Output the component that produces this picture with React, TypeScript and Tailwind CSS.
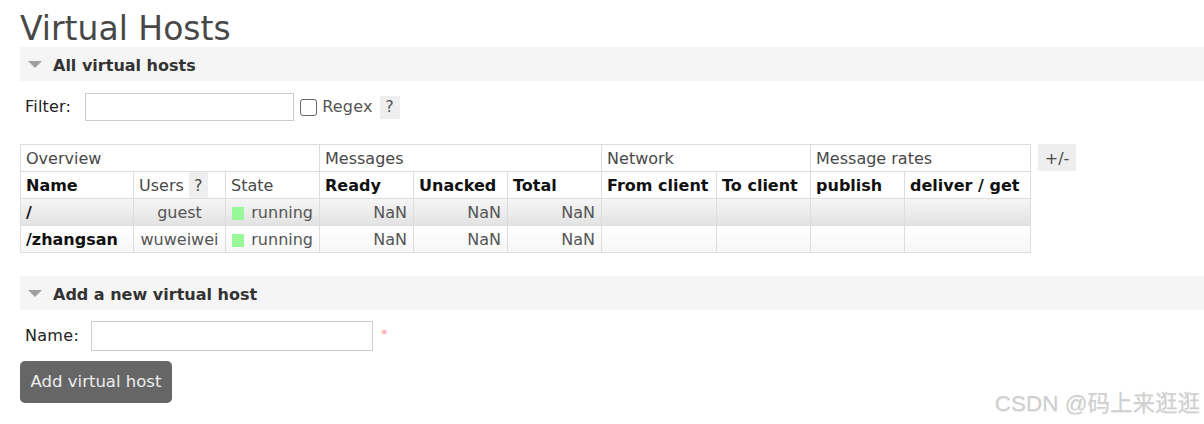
import React from "react";

const cols = [113, 92, 94, 94, 94, 94, 115, 94, 94, 126];

const rows = [
    { name: "/", user: "guest", odd: true },
    { name: "/zhangsan", user: "wuweiwei", odd: false },
];

function SectionBar({ title }: { title: string }) {
    return (
        <div className="flex items-center h-[34px] bg-[#f5f5f5] pl-[8px] pt-[3px]">
            <span className="w-0 h-0 border-l-[7px] border-r-[7px] border-t-[7px] border-l-transparent border-r-transparent border-t-[#a0a0a0] mr-[11px] -mt-[2px]" />
            <span className="font-bold text-[#333] text-[16px]">{title}</span>
        </div>
    );
}

const cell = "border border-[#ddd] pt-[4px] pb-[2px] leading-[20px]";

export default function App() {
    return (
        <div className="relative w-[1204px] h-[424px] bg-white overflow-hidden pl-[20px] font-['DejaVu_Sans',sans-serif] text-[16px] text-[#484848]">
            <h1 className="mt-[12px] text-[33px] leading-[34px] text-[#484848] mb-[1px]">Virtual Hosts</h1>

            <SectionBar title="All virtual hosts" />

            <div className="flex items-center mt-[12px] h-[28px]">
                <span className="ml-[5px] text-[#222] tracking-[0.2px]">Filter:</span>
                <input className="ml-[14px] w-[209px] h-[28px] border border-[#ccc] bg-white" />
                <span className="ml-[6px] w-[17px] h-[17px] border border-[#666] rounded-[3px] bg-white" />
                <span className="ml-[5px] text-[#555] tracking-[0.2px]">Regex</span>
                <span className="ml-[7px] w-[20px] h-[23px] bg-[#eee] text-[#555] flex items-center justify-center">?</span>
            </div>

            <div className="flex items-start mt-[23px]">
                <table className="border-collapse border border-[#ddd] table-fixed w-[1010px]">
                    <colgroup>
                        {cols.map((w, i) => (
                            <col key={i} style={{ width: w }} />
                        ))}
                    </colgroup>
                    <thead>
                        <tr className="bg-white">
                            <th colSpan={3} className={`${cell} font-normal text-left px-[5px] text-[#484848]`}>Overview</th>
                            <th colSpan={3} className={`${cell} font-normal text-left px-[5px] text-[#484848]`}>Messages</th>
                            <th colSpan={2} className={`${cell} font-normal text-left px-[5px] text-[#484848]`}>Network</th>
                            <th colSpan={2} className={`${cell} font-normal text-left px-[5px] text-[#484848]`}>Message rates</th>
                        </tr>
                        <tr className="bg-white text-[#111]">
                            <th className={`${cell} text-left px-[5px]`}>Name</th>
                            <th className="border border-[#ddd] text-left font-normal text-[#484848] p-0">
                                <div className="flex items-stretch h-[26px] leading-[20px]">
                                    <span className="pl-[5px] pt-[4px]">Users</span>
                                    <span className="ml-[5px] w-[19px] pt-[4px] bg-[#eee] text-center">?</span>
                                </div>
                            </th>
                            <th className={`${cell} text-left font-normal text-[#484848] px-[5px]`}>State</th>
                            <th className={`${cell} text-left px-[5px]`}>Ready</th>
                            <th className={`${cell} text-left px-[5px]`}>Unacked</th>
                            <th className={`${cell} text-left px-[5px]`}>Total</th>
                            <th className={`${cell} text-left px-[5px] whitespace-nowrap`}>From client</th>
                            <th className={`${cell} text-left px-[5px] whitespace-nowrap`}>To client</th>
                            <th className={`${cell} text-left px-[5px]`}>publish</th>
                            <th className={`${cell} text-left px-[5px] whitespace-nowrap`}>deliver / get</th>
                        </tr>
                    </thead>
                    <tbody>
                        {rows.map((r) => (
                            <tr
                                key={r.name}
                                className={
                                    r.odd
                                        ? "bg-gradient-to-b from-[#f6f6f6] to-[#e2e2e2]"
                                        : "bg-gradient-to-b from-[#ffffff] to-[#f6f6f6]"
                                }
                            >
                                <td className={`${cell} px-[5px] font-bold text-[#111] whitespace-nowrap`}>{r.name}</td>
                                <td className={`${cell} px-[5px] text-center text-[#555]`}>{r.user}</td>
                                <td className={`${cell} px-[6px] text-[#555]`}>
                                    <div className="flex items-center">
                                        <span className="w-[13px] h-[13px] bg-[#98f898] mr-[7px]" />
                                        <span>running</span>
                                    </div>
                                </td>
                                <td className={`${cell} px-[6px] text-right text-[#555]`}>NaN</td>
                                <td className={`${cell} px-[6px] text-right text-[#555]`}>NaN</td>
                                <td className={`${cell} px-[6px] text-right text-[#555]`}>NaN</td>
                                <td className={cell} />
                                <td className={cell} />
                                <td className={cell} />
                                <td className={cell} />
                            </tr>
                        ))}
                    </tbody>
                </table>
                <span className="ml-[7px] w-[38px] h-[27px] pt-[2px] bg-[#eee] text-[#484848] flex items-center justify-center">+/-</span>
            </div>

            <div className="mt-[23px]">
                <SectionBar title="Add a new virtual host" />
            </div>

            <div className="flex items-center mt-[11px] h-[30px]">
                <span className="ml-[5px] text-[#222] tracking-[0.3px]">Name:</span>
                <input className="ml-[12px] w-[282px] h-[30px] border border-[#ccc] bg-white" />
                <span className="ml-[8px] -mt-[4px] text-[#f99] text-[13px]">*</span>
            </div>

            <button className="mt-[10px] w-[152px] h-[42px] rounded-[5px] bg-[#666] text-[#eee] text-[16.5px] pt-[1px]">
                Add virtual host
            </button>

            <div className="absolute right-[4px] bottom-[3px] text-[22.5px] text-[#cfcfcf] font-['Liberation_Sans','Noto_Sans_CJK_SC',sans-serif] [text-shadow:0_1px_1px_rgba(0,0,0,0.08)]">
                CSDN @码上来逛逛
            </div>
        </div>
    );
}
